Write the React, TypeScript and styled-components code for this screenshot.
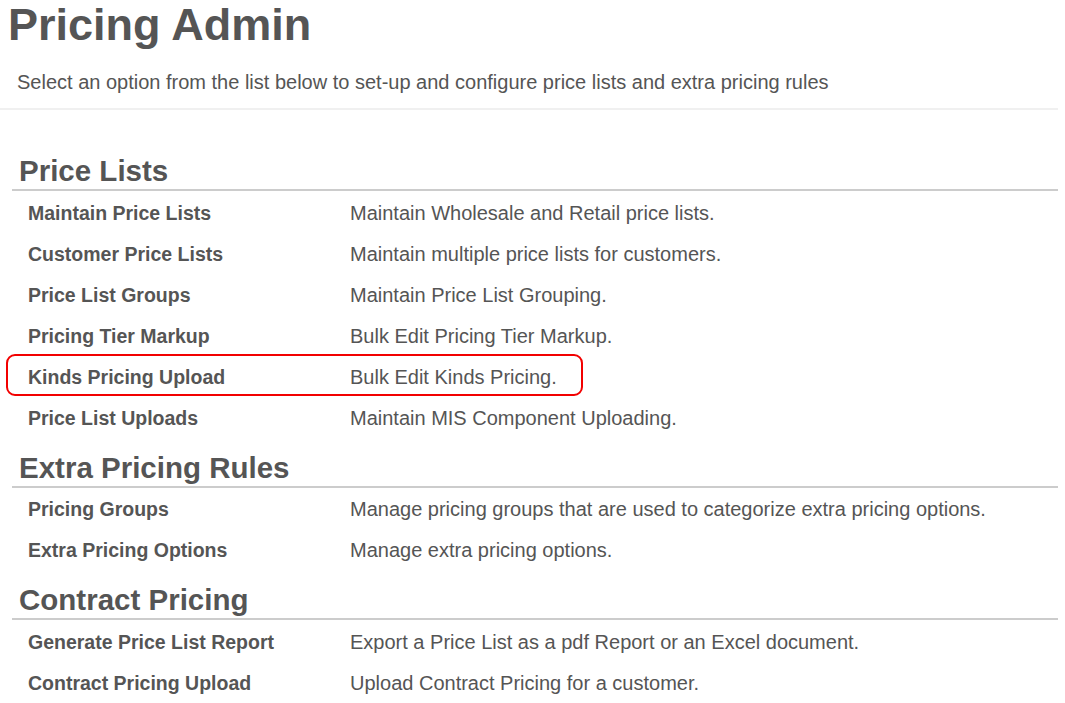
import styled, { createGlobalStyle } from 'styled-components'

type TItem = {
	label: string
	description: string
	highlighted?: boolean
}

type TSection = {
	title: string
	items: TItem[]
}

const sections: TSection[] = [
	{
		title: 'Price Lists',
		items: [
			{ label: 'Maintain Price Lists', description: 'Maintain Wholesale and Retail price lists.' },
			{ label: 'Customer Price Lists', description: 'Maintain multiple price lists for customers.' },
			{ label: 'Price List Groups', description: 'Maintain Price List Grouping.' },
			{ label: 'Pricing Tier Markup', description: 'Bulk Edit Pricing Tier Markup.' },
			{ label: 'Kinds Pricing Upload', description: 'Bulk Edit Kinds Pricing.', highlighted: true },
			{ label: 'Price List Uploads', description: 'Maintain MIS Component Uploading.' },
		],
	},
	{
		title: 'Extra Pricing Rules',
		items: [
			{
				label: 'Pricing Groups',
				description: 'Manage pricing groups that are used to categorize extra pricing options.',
			},
			{ label: 'Extra Pricing Options', description: 'Manage extra pricing options.' },
		],
	},
	{
		title: 'Contract Pricing',
		items: [
			{
				label: 'Generate Price List Report',
				description: 'Export a Price List as a pdf Report or an Excel document.',
			},
			{ label: 'Contract Pricing Upload', description: 'Upload Contract Pricing for a customer.' },
		],
	},
]

const App = () => {
	return (
		<>
			<GlobalStyle />
			<Page>
				<Title>Pricing Admin</Title>
				<Intro>
					Select an option from the list below to set-up and configure price lists and extra pricing
					rules
				</Intro>
				<Divider />
				{sections.map(section => (
					<Section key={section.title}>
						<SectionTitle>{section.title}</SectionTitle>
						<Rows>
							{section.items.map(item => (
								<Row key={item.label} $highlighted={item.highlighted}>
									<Label>{item.label}</Label>
									<Description>{item.description}</Description>
								</Row>
							))}
						</Rows>
					</Section>
				))}
			</Page>
		</>
	)
}

export default App

const GlobalStyle = createGlobalStyle`
	body {
		margin: 0;
		background: #ffffff;
		font-family: 'Liberation Sans', Arial, sans-serif;
		color: #555555;
	}
`

const Page = styled.div`
	width: 1058px;
	padding-bottom: 20px;
`

const Title = styled.h1`
	margin: 0;
	padding-left: 8px;
	font-size: 45px;
	line-height: 49px;
	font-weight: bold;
	color: #555555;
`

const Intro = styled.p`
	margin: 21px 0 0;
	padding-left: 17px;
	font-size: 20px;
	line-height: 24px;
	color: #555555;
`

const Divider = styled.hr`
	margin: 14px 0 0;
	border: none;
	height: 2px;
	background: #f0f0f0;
`

const Section = styled.section`
	margin-left: 12px;
	margin-top: 12px;

	&:first-of-type {
		margin-top: 44px;
	}
`

const SectionTitle = styled.h2`
	margin: 0;
	padding: 0 0 1px 7px;
	font-size: 29.5px;
	line-height: 34px;
	font-weight: bold;
	color: #555555;
	border-bottom: 2px solid #cccccc;
`

const Rows = styled.div`
	padding-top: 1.5px;
`

const Row = styled.div<{ $highlighted?: boolean }>`
	position: relative;
	display: flex;
	align-items: center;
	height: 41px;
	padding-left: 16px;

	&::after {
		content: '';
		display: ${p => (p.$highlighted ? 'block' : 'none')};
		position: absolute;
		left: -6px;
		top: -2.5px;
		width: 577px;
		height: 42px;
		box-sizing: border-box;
		border: 2px solid #f20000;
		border-radius: 9px;
	}
`

const Label = styled.div`
	width: 322px;
	font-size: 19.5px;
	font-weight: bold;
	color: #555555;
`

const Description = styled.div`
	font-size: 20px;
	color: #555555;
`
